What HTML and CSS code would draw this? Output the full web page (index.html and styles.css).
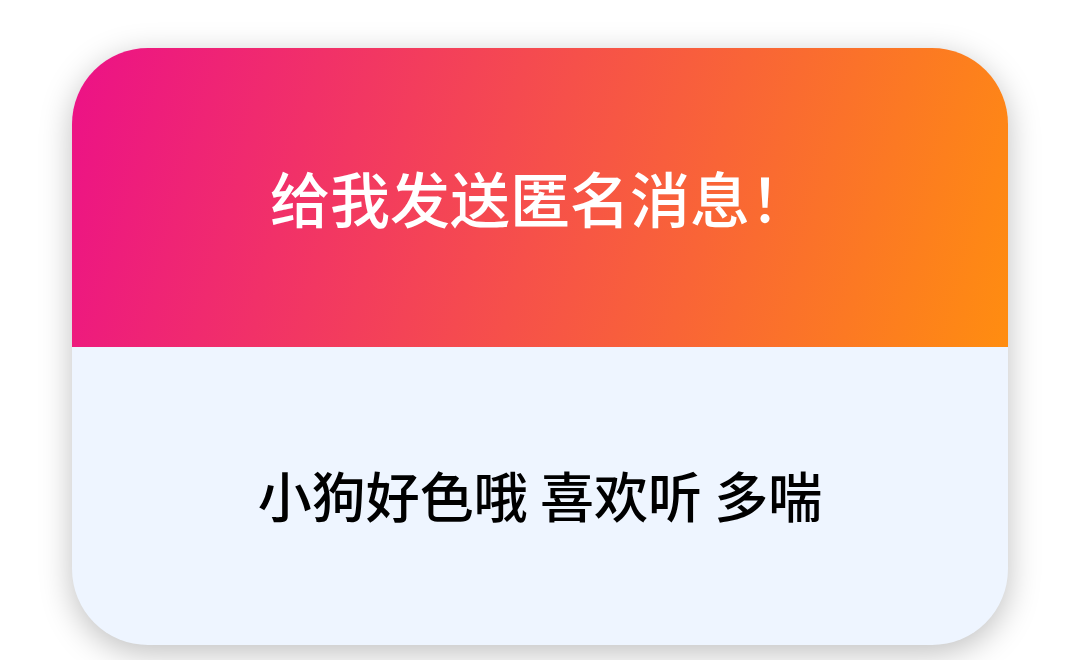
FILE: index.html
```html
<!DOCTYPE html>
<html lang="zh-CN">
	<head>
		<meta charset="utf-8">
		<meta name="viewport" content="width=device-width, initial-scale=1">
		<title>给我发送匿名消息！</title>
		<link rel="stylesheet" href="styles.css">
	</head>
	<body>
		<main class="card">
			<header class="prompt">
				<h1>给我发送匿名消息！</h1>
			</header>
			<div class="message">
				<p>小狗好色哦 喜欢听 多喘</p>
			</div>
		</main>
	</body>
</html>
```

FILE: styles.css
```css
* {
	box-sizing: border-box;
}
body {
	margin: 0;
	padding: 48px 72px 15px;
	background-color: white;
	font-family: "Noto Sans CJK SC", sans-serif;
}
.card {
	border-radius: 76px;
	overflow: hidden;
	background-color: #eef5ff;
	box-shadow: 0 8px 32px rgba(0, 0, 0, 0.25);
}
.prompt, .message {
	display: flex;
	align-items: center;
	justify-content: center;
	padding: 103px 32px 105px;
	text-align: center;
}
.prompt {
	background: linear-gradient(105deg, #ec1187, #f6504a 50%, #ff8d10);
	color: white;
}
	.prompt h1 {
		margin: 0;
		font-size: 60px;
		font-weight: 500;
		line-height: 91px;
	}
	.message p {
		margin: 0;
		font-size: 54px;
		font-weight: 500;
		line-height: 90px;
		color: black;
	}
```
